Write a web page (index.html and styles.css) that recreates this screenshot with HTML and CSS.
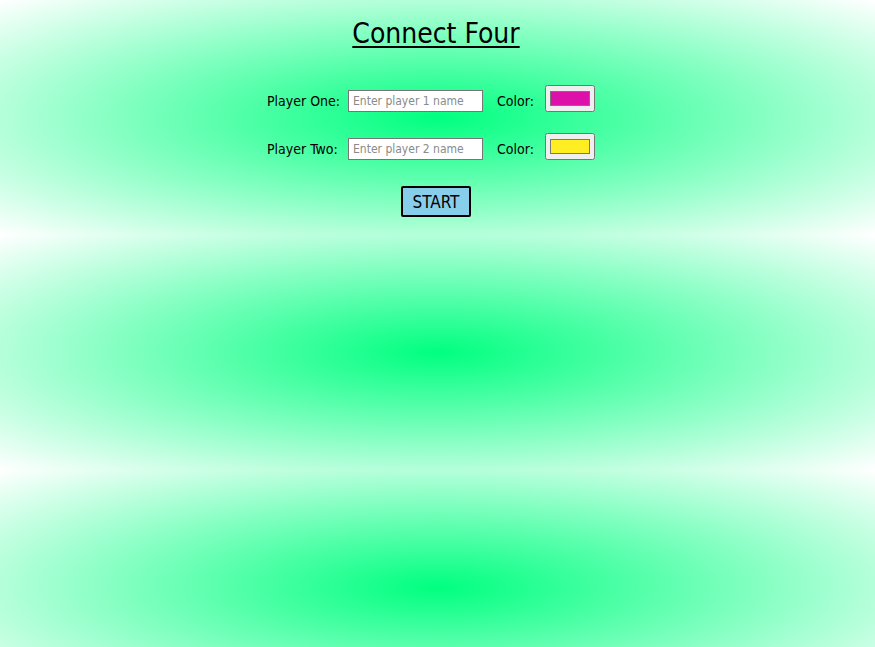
FILE: index.html
```html
<!DOCTYPE html>
<html lang="en">
<head>
<meta charset="utf-8">
<title>Connect Four</title>
<link rel="stylesheet" href="styles.css">
</head>
<body>
<h1 class="title">Connect Four</h1>
<form class="setup">
  <div class="players">
    <label class="label" for="p1">Player One:</label>
    <input class="name" id="p1" type="text" placeholder="Enter player 1 name">
    <label class="label" for="c1">Color:</label>
    <input class="swatch" id="c1" type="color" value="#dd11aa">
    <label class="label" for="p2">Player Two:</label>
    <input class="name" id="p2" type="text" placeholder="Enter player 2 name">
    <label class="label" for="c2">Color:</label>
    <input class="swatch" id="c2" type="color" value="#ffee22">
  </div>
  <button class="start" type="button">START</button>
</form>
</body>
</html>
```
FILE: styles.css
```css
html {
  background: radial-gradient(#00ff80, #ffffff);
  background-size: 100% 235px;
}
body {
  margin: 0;
  font-family: "DejaVu Sans", sans-serif;
  font-stretch: condensed;
  color: #000;
}
.title {
  margin: 16px 0 0;
  padding-right: 3px;
  text-align: center;
  font-size: 28px;
  line-height: 36px;
  font-weight: normal;
  text-decoration: underline;
  text-decoration-thickness: 2px;
  text-underline-offset: 3px;
}
.setup {
  display: flex;
  flex-direction: column;
  align-items: center;
  margin-top: 33px;
  padding-bottom: 18px;
}
.players {
  display: grid;
  grid-template-columns: 81px 149px 48px 50px;
  row-gap: 21px;
  align-items: end;
  padding-right: 13px;
}
.label {
  font-size: 14px;
  line-height: 22px;
  white-space: nowrap;
}
.name {
  box-sizing: border-box;
  width: 135px;
  height: 22px;
  margin: 0;
  padding: 0 4px;
  border: 1px solid #767676;
  background: #fff;
  font-family: inherit;
  font-stretch: condensed;
  font-size: 12px;
}
.name::placeholder {
  color: #8a8a8a;
}
.swatch {
  box-sizing: border-box;
  width: 50px;
  height: 27px;
  margin: 0;
}
.start {
  margin: 26px 3px 0 0;
  width: 70px;
  height: 31px;
  padding: 0;
  border: 2px solid #000;
  border-radius: 2px;
  background: #87ceeb;
  font-family: inherit;
  font-stretch: condensed;
  font-size: 17px;
  color: #000;
}
```
